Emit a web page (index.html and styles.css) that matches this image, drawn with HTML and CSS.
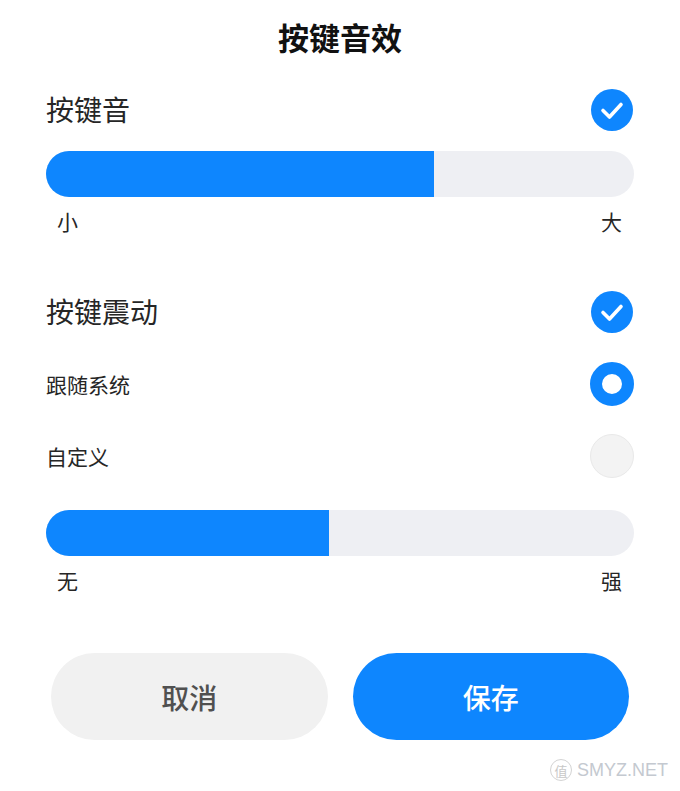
FILE: index.html
```html
<!DOCTYPE html>
<html>
<head>
    <meta charset="UTF-8">
    <title>按键音效</title>
    <link rel="stylesheet" href="styles.css">
</head>
<body>
<div class="panel">
    <h1 class="title">按键音效</h1>

    <div class="row">
        <span class="label">按键音</span>
        <span class="check">
            <svg width="42" height="42" viewBox="0 0 42 42"><circle cx="21" cy="21" r="21" fill="#0e86fe"/><path d="M12 21.5 L18.5 28 L30 15.5" fill="none" stroke="#fff" stroke-width="3.6" stroke-linecap="round" stroke-linejoin="round"/></svg>
        </span>
    </div>
    <div class="slider"><div class="fill" style="width: 66%"></div></div>
    <div class="scale"><span>小</span><span>大</span></div>

    <div class="row row-gap">
        <span class="label">按键震动</span>
        <span class="check">
            <svg width="42" height="42" viewBox="0 0 42 42"><circle cx="21" cy="21" r="21" fill="#0e86fe"/><path d="M12 21.5 L18.5 28 L30 15.5" fill="none" stroke="#fff" stroke-width="3.6" stroke-linecap="round" stroke-linejoin="round"/></svg>
        </span>
    </div>
    <div class="sub first">
        <span class="sub-label">跟随系统</span>
        <span class="radio on"></span>
    </div>
    <div class="sub">
        <span class="sub-label">自定义</span>
        <span class="radio"></span>
    </div>
    <div class="slider slider2"><div class="fill" style="width: 48.1%"></div></div>
    <div class="scale"><span>无</span><span>强</span></div>

    <div class="actions">
        <button class="btn cancel">取消</button>
        <button class="btn save">保存</button>
    </div>
</div>
<div class="mark"><span class="mark-icon">值</span>SMYZ.NET</div>
</body>
</html>
```

FILE: styles.css
```css
* {
    margin: 0;
    padding: 0;
    box-sizing: border-box;
}

html, body {
    width: 100%;
    height: 100%;
    overflow: hidden;
    background: #fff;
}

body {
    font-family: "Noto Sans CJK SC", "Noto Sans", sans-serif;
    color: #222;
}

.panel {
    padding: 0 46px;
}

.title {
    height: 76px;
    line-height: 74px;
    text-align: center;
    font-size: 31px;
    font-weight: bold;
    color: #111;
}

.row {
    height: 68px;
    display: flex;
    align-items: center;
    justify-content: space-between;
}

.row-gap {
    margin-top: 33px;
}

.label {
    font-size: 28px;
    color: #262626;
    margin-top: -3px;
}

.check {
    display: block;
    width: 42px;
    height: 42px;
    margin-right: 1px;
}

.check svg {
    display: block;
}

.slider {
    margin-top: 7px;
    height: 46px;
    border-radius: 23px;
    background: #eeeff3;
    overflow: hidden;
}

.slider2 {
    margin-top: 18px;
}

.fill {
    height: 100%;
    background: #0e86fe;
}

.scale {
    height: 48px;
    display: flex;
    align-items: center;
    justify-content: space-between;
    padding: 0 12px 0 11px;
    font-size: 21px;
    color: #262626;
}

.sub {
    height: 72px;
    display: flex;
    align-items: center;
    justify-content: space-between;
}

.sub.first {
    margin-top: 2px;
}

.sub-label {
    font-size: 21px;
    color: #262626;
}

.radio {
    display: block;
    width: 44px;
    height: 44px;
    border-radius: 50%;
    background: #f3f3f3;
    border: 1px solid #e9e9e9;
}

.radio.on {
    background: #fff;
    border: 12px solid #0e86fe;
}

.actions {
    margin-top: 49px;
    padding: 0 5px;
    display: flex;
    gap: 25px;
}

.btn {
    flex: 1;
    height: 87px;
    border: none;
    border-radius: 44px;
    font-family: "Noto Sans CJK SC", "Noto Sans", sans-serif;
    font-size: 28px;
    font-weight: 500;
}

.cancel {
    background: #f1f1f1;
    color: #505050;
}

.save {
    background: #0e86fe;
    color: #fff;
}

.mark {
    position: absolute;
    right: 12px;
    bottom: 10px;
    display: flex;
    align-items: center;
    gap: 5px;
    font-family: "Liberation Sans", sans-serif;
    font-size: 18px;
    color: #c4c9d0;
}

.mark-icon {
    display: flex;
    align-items: center;
    justify-content: center;
    width: 22px;
    height: 22px;
    border: 1.5px solid #d3d3d3;
    border-radius: 50%;
    font-family: "Noto Sans CJK SC", sans-serif;
    font-size: 13px;
    color: #c8c8c8;
}
```
